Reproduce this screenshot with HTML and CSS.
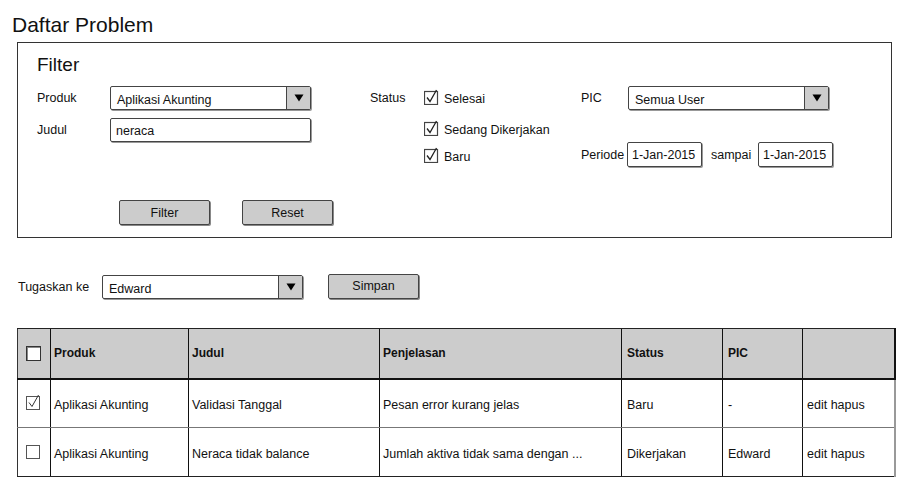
FILE: index.html
```html
<!DOCTYPE html>
<html>
<head>
<meta charset="utf-8">
<link rel="stylesheet" href="styles.css">
</head>
<body>
<div class="page">
  <h1 class="title">Daftar Problem</h1>

  <section class="filter">
    <h2 class="filter-title">Filter</h2>
    <div class="filter-cols">
      <div class="col col1">
        <div class="frow">
          <span class="lbl lbl1">Produk</span>
          <div class="select w201"><span class="sel-text">Aplikasi Akunting</span><span class="arrow"><svg width="10" height="8" viewBox="0 0 10 8"><path d="M0.5 0.5 L9.5 0.5 L5 7.5 Z" fill="#000"/></svg></span></div>
        </div>
        <div class="frow">
          <span class="lbl lbl1">Judul</span>
          <div class="input w201">neraca</div>
        </div>
      </div>

      <div class="col col2">
        <div class="srow">
          <span class="lbl lbl2">Status</span>
          <span class="cb"><svg width="16" height="16" viewBox="0 0 16 16"><rect x="0.5" y="2.5" width="13" height="13" fill="#fff" stroke="#444" stroke-width="1.2"/><path d="M3 8.5 L6 12.5 L12.5 1" fill="none" stroke="#222" stroke-width="1.3"/></svg></span>
          <span class="cb-text">Selesai</span>
        </div>
        <div class="srow r2">
          <span class="lbl lbl2"></span>
          <span class="cb"><svg width="16" height="16" viewBox="0 0 16 16"><rect x="0.5" y="2.5" width="13" height="13" fill="#fff" stroke="#444" stroke-width="1.2"/><path d="M3 8.5 L6 12.5 L12.5 1" fill="none" stroke="#222" stroke-width="1.3"/></svg></span>
          <span class="cb-text">Sedang Dikerjakan</span>
        </div>
        <div class="srow r3">
          <span class="lbl lbl2"></span>
          <span class="cb"><svg width="16" height="16" viewBox="0 0 16 16"><rect x="0.5" y="2.5" width="13" height="13" fill="#fff" stroke="#444" stroke-width="1.2"/><path d="M3 8.5 L6 12.5 L12.5 1" fill="none" stroke="#222" stroke-width="1.3"/></svg></span>
          <span class="cb-text">Baru</span>
        </div>
      </div>

      <div class="col col3">
        <div class="frow">
          <span class="lbl lbl3">PIC</span>
          <div class="select w201"><span class="sel-text">Semua User</span><span class="arrow"><svg width="10" height="8" viewBox="0 0 10 8"><path d="M0.5 0.5 L9.5 0.5 L5 7.5 Z" fill="#000"/></svg></span></div>
        </div>
        <div class="frow prow">
          <span class="lbl lbl3b">Periode</span>
          <div class="input date">1-Jan-2015</div>
          <span class="sampai">sampai</span>
          <div class="input date">1-Jan-2015</div>
        </div>
      </div>
    </div>

    <div class="btns">
      <button class="btn">Filter</button>
      <button class="btn">Reset</button>
    </div>
  </section>

  <div class="assign">
    <span class="lbl-assign">Tugaskan ke</span>
    <div class="select w201"><span class="sel-text">Edward</span><span class="arrow"><svg width="10" height="8" viewBox="0 0 10 8"><path d="M0.5 0.5 L9.5 0.5 L5 7.5 Z" fill="#000"/></svg></span></div>
    <button class="btn simpan">Simpan</button>
  </div>

  <table class="grid">
    <colgroup>
      <col class="c0"><col class="c1"><col class="c2"><col class="c3"><col class="c4"><col class="c5"><col class="c6">
    </colgroup>
    <thead>
      <tr>
        <th class="cbcell"><span class="hcb"></span></th>
        <th>Produk</th>
        <th>Judul</th>
        <th>Penjelasan</th>
        <th>Status</th>
        <th>PIC</th>
        <th class="last"></th>
      </tr>
    </thead>
    <tbody>
      <tr>
        <td class="cbcell"><svg width="16" height="16" viewBox="0 0 16 16"><rect x="0.5" y="2.5" width="13" height="13" fill="#fff" stroke="#555" stroke-width="1"/><path d="M3 8.5 L6 12.5 L12.5 1" fill="none" stroke="#333" stroke-width="1"/></svg></td>
        <td>Aplikasi Akunting</td>
        <td>Validasi Tanggal</td>
        <td>Pesan error kurang jelas</td>
        <td>Baru</td>
        <td>-</td>
        <td class="last">edit hapus</td>
      </tr>
      <tr>
        <td class="cbcell"><svg width="16" height="16" viewBox="0 0 16 16"><rect x="0.5" y="2.5" width="13" height="13" fill="#fff" stroke="#555" stroke-width="1"/></svg></td>
        <td>Aplikasi Akunting</td>
        <td>Neraca tidak balance</td>
        <td>Jumlah aktiva tidak sama dengan ...</td>
        <td>Dikerjakan</td>
        <td>Edward</td>
        <td class="last">edit hapus</td>
      </tr>
    </tbody>
  </table>
</div>
</body>
</html>
```

FILE: styles.css
```css
* { box-sizing: border-box; }
html, body { margin: 0; padding: 0; background: #fff; }
body {
  font-family: "Liberation Sans", Arial, sans-serif;
  font-size: 12.5px;
  color: #111;
}
.page { width: 905px; height: 486px; padding: 12px 0 0 0; position: relative; }

.title {
  margin: 0 0 0 12px;
  font-size: 21px;
  font-weight: normal;
  line-height: 26px;
  height: 30px;
}

.filter {
  margin-left: 17px;
  width: 875px;
  height: 196px;
  border: 1px solid #333;
  border-right-width: 1.5px;
  border-bottom-width: 1.5px;
  padding: 10px 0 0 19px;
}
.filter-title {
  margin: 0;
  font-size: 19px;
  font-weight: normal;
  line-height: 24px;
  height: 33px;
}

.filter-cols { display: flex; }
.col1 { width: 333px; display: flex; flex-direction: column; gap: 8px; }
.col2 { width: 211px; display: flex; flex-direction: column; }
.col3 { display: flex; flex-direction: column; }

.frow { display: flex; align-items: center; height: 24px; }
.lbl { display: inline-block; }
.lbl1 { width: 73px; }
.lbl2 { width: 54px; }
.lbl3 { width: 47px; }
.lbl3b { width: 46px; }
.srow { display: flex; align-items: center; height: 24px; padding-top: 2px; }
.srow .lbl2 { margin-top: -2px; }
.r2 { margin-top: 7px; }
.r3 { margin-top: 3px; }
.cb { width: 20px; height: 16px; display: inline-flex; margin-top: -4px; }
.cb-text { display: inline-block; }

.prow { margin-top: 32px; height: 25px; }

.select {
  display: flex;
  height: 24px;
  border: 1px solid #444;
  border-radius: 2px;
  background: #fff;
  box-shadow: 1px 1px 0 #999;
}
.w201 { width: 201px; }
.sel-text { flex: 1; padding: 6px 0 0 6px; line-height: 14px; }
.arrow {
  width: 24px;
  background: #ccc;
  border-left: 1px solid #444;
  display: flex;
  align-items: center;
  justify-content: center;
}
.input {
  height: 24px;
  border: 1px solid #444;
  border-radius: 2px;
  padding: 5px 0 0 5px;
  line-height: 14px;
  background: #fff;
  box-shadow: 1px 1px 0 #999;
}
.date { width: 75px; height: 25px; padding: 5px 0 0 4px; }
.sampai { width: 56px; padding-left: 9px; }

.btns { display: flex; gap: 32px; margin: 32px 0 0 82px; }
.btn {
  width: 91px;
  height: 25px;
  background: #ccc;
  border: 1px solid #444;
  border-radius: 2px;
  font-family: inherit;
  font-size: 12.5px;
  color: #111;
  padding: 0;
  box-shadow: 1px 1px 0 #888;
}

.assign {
  display: flex;
  align-items: center;
  margin: 36px 0 0 18px;
  height: 26px;
}
.lbl-assign { width: 84px; }
.simpan { margin-left: 25px; margin-top: -2px; }

.grid {
  margin: 28px 0 0 17px;
  width: 877px;
  border-collapse: collapse;
  table-layout: fixed;
}
.c0 { width: 33px; } .c1 { width: 138px; } .c2 { width: 191px; } .c3 { width: 242px; }
.c4 { width: 101px; } .c5 { width: 80px; } .c6 { width: 92px; }
.grid th, .grid td {
  border-left: 1px solid #111;
  text-align: left;
  padding: 0 0 0 3px;
  white-space: nowrap;
  overflow: hidden;
}
.grid td { padding-top: 3px; }
.grid th:nth-child(5), .grid td:nth-child(5),
.grid th:nth-child(6), .grid td:nth-child(6) { padding-left: 5px; }
.grid th.last, .grid td.last { padding-left: 4px; }
.grid thead tr { background: #ccc; height: 50px; }
.grid th {
  font-size: 12px;
  font-weight: bold;
  border-top: 1px solid #222;
  border-bottom: 2px solid #111;
}
.grid th.last { border-right: 2px solid #111; }
.grid th:first-child, .grid td:first-child { border-left: 1px solid #333; }
.grid tbody tr { height: 49px; }
.grid td { border-bottom: 1px solid #777; }
.grid tbody tr:last-child td { border-bottom: 1px solid #222; }
.grid td.last { border-right: 2px solid #999; }
.grid .cbcell { padding: 0 0 0 8px; }
.grid td.cbcell svg { display: block; margin-top: -3px; }
.hcb {
  display: block;
  width: 15px;
  height: 15px;
  background: #fff;
  border: 1px solid #333;
  box-shadow: inset 1px 1px 0 #888;
}
```
